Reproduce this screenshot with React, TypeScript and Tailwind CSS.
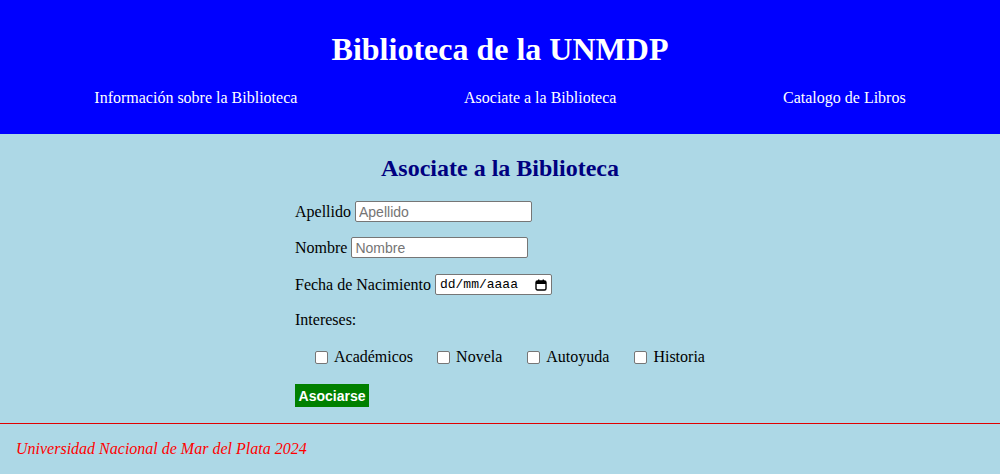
const serif = "font-['Liberation_Serif','Times_New_Roman',serif]";

function TextField({ placeholder, width }: { placeholder: string; width: string }) {
  return (
    <input
      type="text"
      placeholder={placeholder}
      className={`${width} h-[21px] border border-[#767676] rounded-[2px] bg-white px-[3px] text-[14px] text-black placeholder:text-[#757575] font-['Liberation_Sans',Arial,sans-serif] outline-none`}
    />
  );
}

function DateField() {
  return (
    <div className="w-[117px] h-[21px] border border-[#767676] rounded-[2px] bg-white flex items-center justify-between pl-[4px] pr-[4px]">
      <span className="text-[13px] text-black font-['Liberation_Mono','Courier_New',monospace]">dd/mm/aaaa</span>
      <svg width="12" height="12" viewBox="0 0 12 12" fill="none">
        <rect x="1" y="2" width="10" height="9" rx="1.5" stroke="#000" strokeWidth="1.4" />
        <rect x="1" y="2" width="10" height="3" fill="#000" />
        <rect x="3" y="0.5" width="1.4" height="2.5" fill="#000" />
        <rect x="7.6" y="0.5" width="1.4" height="2.5" fill="#000" />
      </svg>
    </div>
  );
}

function Check({ label, gap }: { label: string; gap: string }) {
  return (
    <label className={`flex items-center ${gap}`}>
      <input
        type="checkbox"
        className="appearance-none w-[13px] h-[13px] border border-[#767676] rounded-[2px] bg-white"
      />
      <span className="ml-[6px]">{label}</span>
    </label>
  );
}

export default function App() {
  return (
    <div className={`min-h-[474px] bg-[#add8e6] text-black text-[16px] leading-[18px] ${serif}`}>
      <header className="bg-[#0000ff] text-white pt-[10px] pb-[27px]">
        <h1 className="mt-[21px] text-center text-[32px] leading-[37px] font-bold">Biblioteca de la UNMDP</h1>
        <nav className="mt-[21px]">
          <ul className="flex justify-around px-[11px]">
            <li>Información sobre la Biblioteca</li>
            <li>Asociate a la Biblioteca</li>
            <li>Catalogo de Libros</li>
          </ul>
        </nav>
      </header>

      <main className="pt-[20px]">
        <h2 className="text-center text-[24px] leading-[28px] font-bold text-[#000080]">Asociate a la Biblioteca</h2>
        <form className="w-[410px] mx-auto mt-[19px] flex flex-col">
          <div className="flex items-center h-[21px]">
            <span className="mr-[4px]">Apellido</span>
            <TextField placeholder="Apellido" width="w-[177px]" />
          </div>
          <div className="flex items-center h-[21px] mt-[15px]">
            <span className="mr-[4px]">Nombre</span>
            <TextField placeholder="Nombre" width="w-[177px]" />
          </div>
          <div className="flex items-center h-[21px] mt-[16px]">
            <span className="mr-[4px]">Fecha de Nacimiento</span>
            <DateField />
          </div>
          <div className="mt-[16px] h-[18px]">Intereses:</div>
          <div className="flex items-center pl-[20px] mt-[19px] h-[18px]">
            <Check label="Académicos" gap="mr-[24px]" />
            <Check label="Novela" gap="mr-[25px]" />
            <Check label="Autoyuda" gap="mr-[25px]" />
            <Check label="Historia" gap="" />
          </div>
          <div className="mt-[18px]">
            <button
              type="button"
              className="w-[74px] h-[23px] bg-[#008000] text-white font-bold text-[14px] font-['Liberation_Sans',Arial,sans-serif]"
            >
              Asociarse
            </button>
          </div>
        </form>
      </main>

      <footer className="mt-[16px]">
        <div className="h-px bg-[#e00000]" />
        <p className="px-[16px] py-[16px] italic text-[#ff0000]">Universidad Nacional de Mar del Plata 2024</p>
      </footer>
    </div>
  );
}
